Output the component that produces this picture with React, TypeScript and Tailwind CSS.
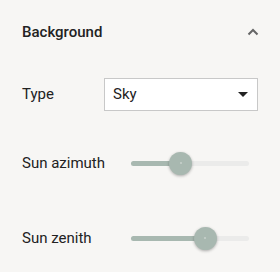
import React from 'react';

const Slider = ({ value }: { value: number }) => (
  <div className="relative w-[118px] h-[22px] flex items-center">
    <div className="w-full h-[5px] rounded-full bg-[#ebebea]" />
    <div className="absolute left-0 h-[5px] rounded-full bg-[#a8b8b0]" style={{ width: `${value}%` }} />
    <div
      className="absolute w-[23px] h-[23px] -ml-[11.5px] rounded-full bg-[#a8b8b0] shadow-[0_1px_3px_rgba(0,0,0,0.3)] flex items-center justify-center"
      style={{ left: `${value}%` }}
    >
      <div className="w-[2px] h-[2px] rounded-full bg-[#c8d2cc]" />
    </div>
  </div>
);

export default function App() {
  return (
    <div className="w-[280px] h-[272px] bg-[#f7f6f4] px-[22px] text-[15px] text-[#222] font-['Roboto',sans-serif]">
      <div className="h-[64px] flex items-center justify-between">
        <span className="font-medium text-[15px]">Background</span>
        <svg width="12" height="8" viewBox="0 0 12 8" className="mr-[-1px]">
          <polyline points="1.5,6.5 6,2 10.5,6.5" fill="none" stroke="#666" strokeWidth="2" />
        </svg>
      </div>
      <div className="mt-[14px] flex items-center h-[33px]">
        <span className="w-[82px]">Type</span>
        <div className="flex-1 h-[33px] bg-white border border-[#c8c8c8] flex items-center justify-between pl-[8px] pr-[9px]">
          <span>Sky</span>
          <svg width="10" height="5" viewBox="0 0 10 5">
            <polygon points="0,0 10,0 5,5" fill="#222" />
          </svg>
        </div>
      </div>
      <div className="mt-[40px] flex items-center h-[24px]">
        <span className="w-[109px]">Sun azimuth</span>
        <Slider value={42} />
      </div>
      <div className="mt-[51px] flex items-center h-[24px]">
        <span className="w-[109px]">Sun zenith</span>
        <Slider value={63} />
      </div>
    </div>
  );
}
